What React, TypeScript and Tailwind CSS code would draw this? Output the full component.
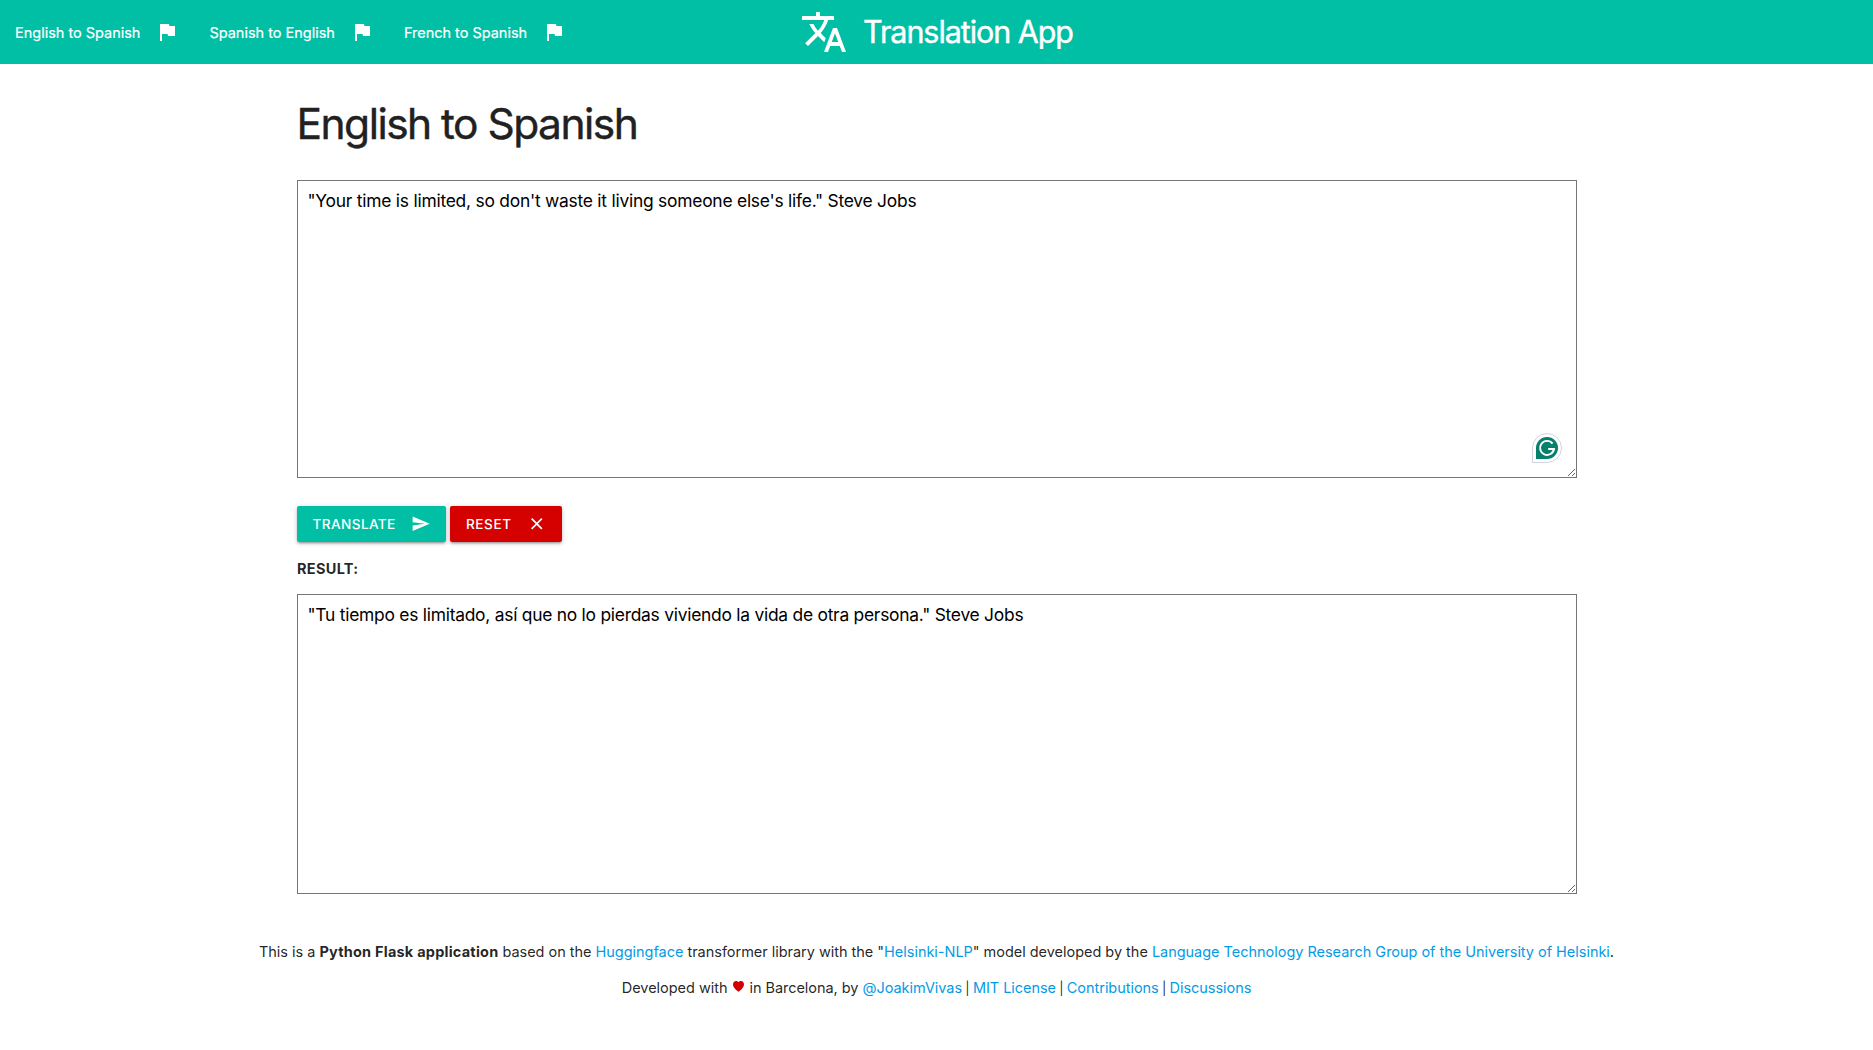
import React from 'react';

const navLinks = ['English to Spanish', 'Spanish to English', 'French to Spanish'];

function Icon({ d, className }: { d: string; className: string }) {
  return (
    <svg viewBox="0 0 24 24" fill="currentColor" className={className} aria-hidden="true">
      <path d={d} />
    </svg>
  );
}

const FLAG = 'M14.4 6L14 4H5v17h2v-7h5.6l.4 2h7V6z';
const TRANSLATE =
  'M12.87 15.07l-2.54-2.51.03-.03c1.74-1.94 2.98-4.17 3.71-6.53H17V4h-7V2H8v2H1v1.99h11.17C11.5 7.92 10.44 9.75 9 11.35 8.07 10.32 7.3 9.19 6.69 8h-2c.73 1.63 1.73 3.17 2.98 4.56l-5.09 5.02L4 19l5-5 3.11 3.11.76-2.04zM18.5 10h-2L12 22h2l1.12-3h4.75L21 22h2l-4.5-12zm-2.62 7l1.62-4.33L19.12 17h-3.24z';
const SEND = 'M2.01 21L23 12 2.01 3 2 10l15 2-15 2z';
const CLOSE =
  'M19 6.41L17.59 5 12 10.59 6.41 5 5 6.41 10.59 12 5 17.59 6.41 19 12 13.41 17.59 19 19 17.59 13.41 12z';

function Navbar() {
  return (
    <nav className="relative flex h-16 items-center justify-center bg-[#00bfa5] text-white">
      <ul className="absolute left-0 top-0 flex h-16">
        {navLinks.map((label) => (
          <li key={label} className="flex items-center gap-[15px] px-[15px]">
            <span className="pt-px text-[14.5px] tracking-[-0.012px] [-webkit-text-stroke:0.2px]">{label}</span>
            <Icon d={FLAG} className="size-6" />
          </li>
        ))}
      </ul>
      <a className="flex items-center gap-[15px]">
        <Icon d={TRANSLATE} className="size-12" />
        <span className="text-[30.5px] leading-[64px] tracking-[-1.06px] [-webkit-text-stroke:0.4px]">
          Translation App
        </span>
      </a>
    </nav>
  );
}

function GrammarBadge() {
  return (
    <div className="absolute bottom-[15px] right-[15px] flex size-[30px] items-center justify-center rounded-full rounded-bl-none border border-[#cfd3e0] bg-white">
      <div className="flex size-[22px] items-center justify-center rounded-full rounded-bl-none bg-[#06806d]">
        <svg viewBox="0 0 22 22" className="size-[22px]" fill="none" stroke="white" strokeWidth="1.9">
          <path d="M16.6 6.6A7 7 0 1 0 18 12H12.2" />
        </svg>
      </div>
    </div>
  );
}

function Link({ children }: { children: React.ReactNode }) {
  return <a className="text-[#039be5]">{children}</a>;
}

function Bar() {
  return <span className="-mx-[0.8px] text-[13px]">|</span>;
}

export default function App() {
  return (
    <div className="min-h-[1050px] bg-white font-['Inter','Liberation_Sans',sans-serif] text-[14.5px] text-black/87">
      <Navbar />
      <main className="mx-auto w-[1280px]">
        <h1 className="mt-[35px] text-[42.5px] leading-[49px] tracking-[-1.53px] text-[#212121] [-webkit-text-stroke:0.4px]">
          English to Spanish
        </h1>
        <div className="relative mt-8">
          <textarea
            className="block h-[298px] w-full resize border border-[#767676] bg-white px-2.5 py-[9px] text-[17.4px] leading-[21px] tracking-[-0.23px] text-black"
            defaultValue={'"Your time is limited, so don\'t waste it living someone else\'s life." Steve Jobs'}
          />
          <GrammarBadge />
        </div>
        <div className="mt-7 flex gap-1">
          <button className="flex h-9 w-[149px] items-center justify-between rounded-[2px] bg-[#00bfa5] pl-4 pr-[15px] text-[13.6px] font-medium tracking-[0.4px] text-white shadow-[0_2px_2px_0_rgba(0,0,0,0.14),0_3px_1px_-2px_rgba(0,0,0,0.12),0_1px_5px_0_rgba(0,0,0,0.2)]">
            TRANSLATE
            <Icon d={SEND} className="size-[19.5px]" />
          </button>
          <button className="flex h-9 w-28 items-center justify-between rounded-[2px] bg-[#d50000] pl-[16.5px] pr-[15px] text-[13.6px] font-medium tracking-[0.55px] text-white shadow-[0_2px_2px_0_rgba(0,0,0,0.14),0_3px_1px_-2px_rgba(0,0,0,0.12),0_1px_5px_0_rgba(0,0,0,0.2)]">
            RESET
            <Icon d={CLOSE} className="size-[19.5px]" />
          </button>
        </div>
        <p className="mt-4 pl-[0.5px] font-bold leading-[22px] tracking-[0.3px]">RESULT:</p>
        <textarea
          className="mt-3.5 block h-[300px] w-full resize border border-[#767676] bg-white px-2.5 py-[9px] text-[17.4px] leading-[21px] tracking-[-0.245px] text-black"
          defaultValue={'"Tu tiempo es limitado, así que no lo pierdas viviendo la vida de otra persona." Steve Jobs'}
        />
      </main>
      <footer className="mt-[47px] text-center leading-[22px] tracking-[-0.025px]">
        <p>
          This is a <b className="font-bold tracking-[0.22px]">Python Flask application</b> based on the{' '}
          <Link>Huggingface</Link> transformer library with the "<Link>Helsinki-NLP</Link>" model developed by the{' '}
          <Link>Language Technology Research Group of the University of Helsinki</Link>.
        </p>
        <p className="mt-3.5">
          Developed with{' '}
          <svg viewBox="0 0 11 11" className="mx-[1.4px] mb-px inline-block size-[11px] align-baseline" fill="#d50000" aria-hidden="true">
            <path d="M5.5 10.8C3.6 9.2 0 6.6 0 3.2 0 1.3 1.3 0 3 0c1 0 1.9.5 2.5 1.3C6.1.5 7 0 8 0c1.7 0 3 1.3 3 3.2 0 3.4-3.6 6-5.5 7.6z" />
          </svg>{' '}
          <span className="tracking-[-0.04px]">
            in Barcelona, by <Link>@JoakimVivas</Link> <Bar /> <Link>MIT License</Link> <Bar />{' '}
            <Link>Contributions</Link> <Bar /> <Link>Discussions</Link>
          </span>
        </p>
      </footer>
    </div>
  );
}
